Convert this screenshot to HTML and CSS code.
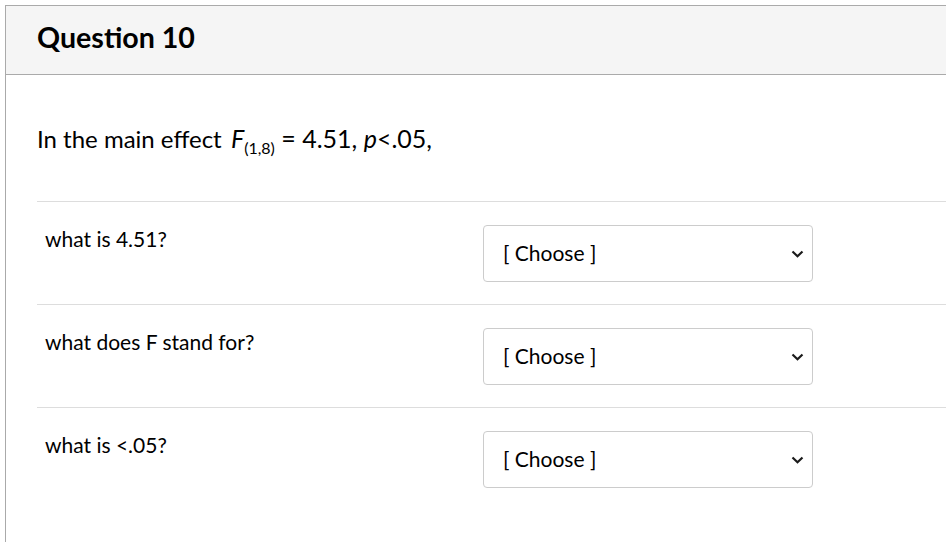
FILE: index.html
```html
<!DOCTYPE html>
<html lang="en">
<head>
<meta charset="utf-8">
<title>Question 10</title>
<link rel="stylesheet" href="styles.css">
</head>
<body>
<div class="card">
  <div class="card-header">
    <h2 class="title">Question 10</h2>
  </div>
  <div class="card-body">
    <p class="prompt">In the main effect <span class="math"><i>F</i><sub>(1,8)</sub> = 4.51, <i>p</i>&lt;.05,</span></p>
    <div class="rows">
      <div class="row">
        <div class="label">what is 4.51?</div>
        <div class="select"><span class="select-text">[ Choose ]</span><svg class="chev" width="13" height="8" viewBox="0 0 13 8"><path d="M1.5 1.5 L6.5 6.2 L11.5 1.5" fill="none" stroke="#1a1a1a" stroke-width="2.2"/></svg></div>
      </div>
      <div class="row">
        <div class="label">what does F stand for?</div>
        <div class="select"><span class="select-text">[ Choose ]</span><svg class="chev" width="13" height="8" viewBox="0 0 13 8"><path d="M1.5 1.5 L6.5 6.2 L11.5 1.5" fill="none" stroke="#1a1a1a" stroke-width="2.2"/></svg></div>
      </div>
      <div class="row">
        <div class="label">what is &lt;.05?</div>
        <div class="select"><span class="select-text">[ Choose ]</span><svg class="chev" width="13" height="8" viewBox="0 0 13 8"><path d="M1.5 1.5 L6.5 6.2 L11.5 1.5" fill="none" stroke="#1a1a1a" stroke-width="2.2"/></svg></div>
      </div>
    </div>
  </div>
</div>
</body>
</html>
```

FILE: styles.css
```css
html, body {
  margin: 0;
  padding: 0;
  background: #ffffff;
}
body {
  font-family: Lato, "Open Sans", "Liberation Sans", sans-serif;
  color: #2d3b45;
  padding: 5px 0 0 5px;
  overflow: hidden;
}
.card {
  border-top: 1px solid #aaaaaa;
  border-left: 1px solid #aaaaaa;
  min-height: 560px;
  width: 941px;
}
.card-header {
  background: #f5f5f5;
  border-bottom: 1px solid #aaaaaa;
  height: 68px;
  display: flex;
  align-items: center;
  padding-left: 31px;
}
.title {
  margin: 0;
  font-size: 28.6px;
  font-weight: 700;
  color: #000000;
  line-height: 1;
  padding-bottom: 6px;
}
.card-body {
  padding: 0 0 0 31px;
}
.prompt {
  margin: 0;
  padding-top: 48px;
  height: 78px;
  font-size: 24px;
  line-height: 30px;
  color: #000000;
  white-space: nowrap;
}
.math {
  font-size: 25px;
  margin-left: 3px;
}
.math sub {
  font-size: 16px;
  vertical-align: -6px;
  line-height: 0;
}
.rows {
  display: flex;
  flex-direction: column;
}
.row {
  border-top: 1px solid #dddddd;
  display: grid;
  grid-template-columns: 446px 330px;
  padding: 23px 0 22px 0;
}
.label {
  padding-left: 8px;
  padding-top: 1px;
  font-size: 21px;
  line-height: 26px;
  color: #000000;
}
.select {
  box-sizing: border-box;
  height: 57px;
  border: 1px solid #cccccc;
  border-radius: 4px;
  display: flex;
  align-items: center;
  justify-content: space-between;
  padding: 0 8px 3px 19px;
  background: #ffffff;
}
.select-text {
  font-size: 21px;
  color: #000000;
}
.chev {
  display: block;
  margin-top: 3px;
}
```
